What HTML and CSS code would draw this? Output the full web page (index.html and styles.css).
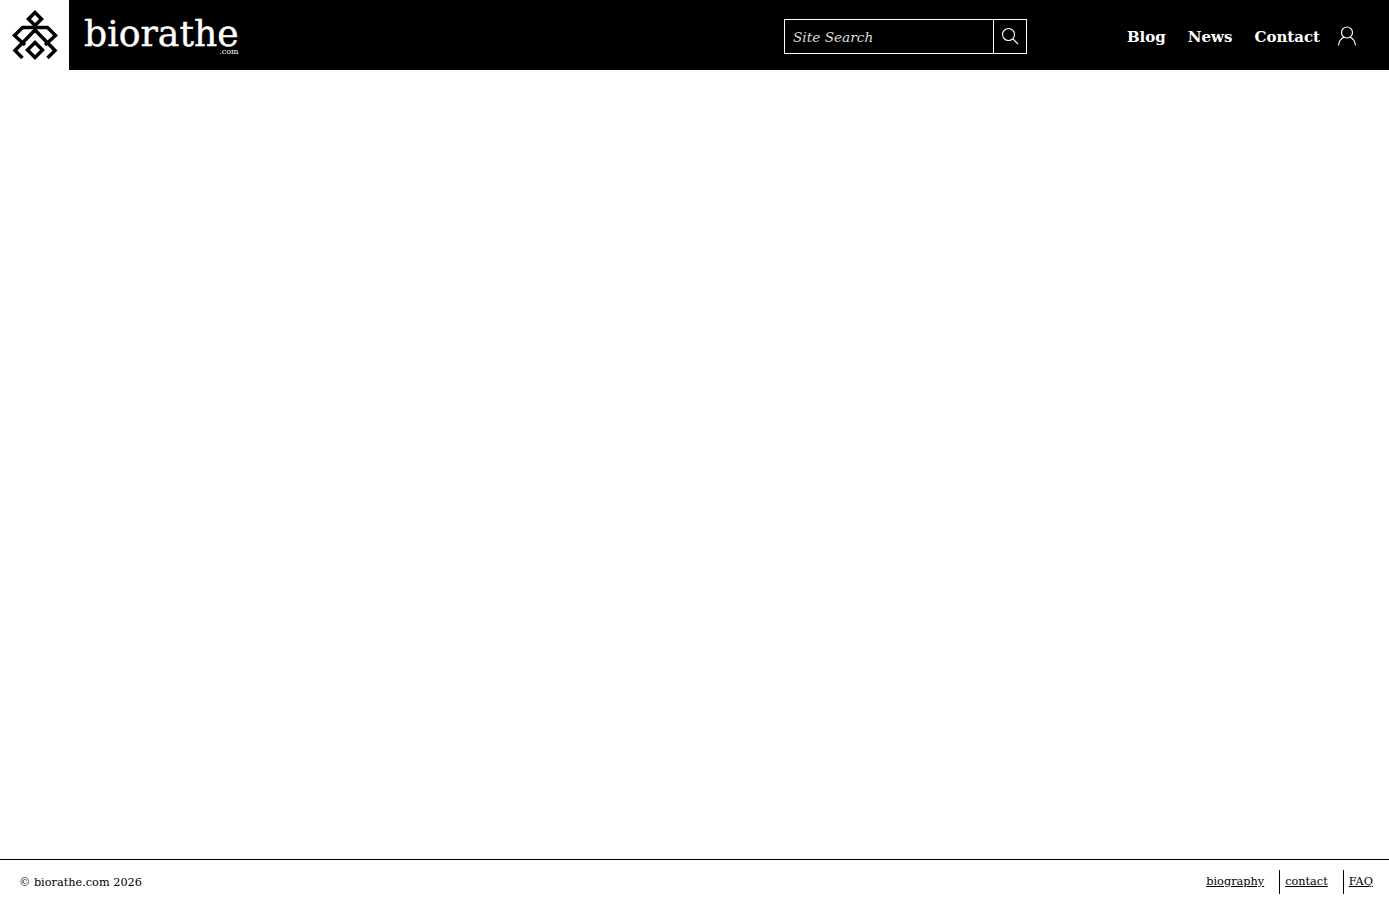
FILE: index.html
```html
<!DOCTYPE html>
<html lang="en">
<head>
    <meta charset="UTF-8">
    <meta name="viewport" content="width=device-width, initial-scale=1.0">
    <title>biorathe.com</title>
    <link rel="stylesheet" href="styles.css">
</head>
<body>

<header class="site-header">
    <a class="logo-mark" href="#">
        <svg width="46" height="50" viewBox="0 0 46 50" fill="none" stroke="#000" stroke-width="3.5">
            <path d="M23 2.5 L29.5 9 L23 15.5 L16.5 9 Z"/>
            <path d="M23 15 V21"/>
            <path d="M9.5 17.5 H36.5"/>
            <path d="M10.5 17.5 L2.5 25.5 L13 35"/>
            <path d="M35.5 17.5 L43.5 25.5 L33 35"/>
            <path d="M23 20 L3 40.5 L10.5 48"/>
            <path d="M23 20 L43 40.5 L35.5 48"/>
            <path d="M23 32.5 L30.5 40 L23 47.5 L15.5 40 Z"/>
        </svg>
    </a>
    <a class="brand" href="#">
        <span class="brand-name">biorathe</span>
        <span class="brand-tld">.com</span>
    </a>

    <form class="search">
        <input class="search-input" type="text" placeholder="Site Search">
        <button class="search-btn" type="button">
            <svg width="18" height="18" viewBox="0 0 18 18" fill="none" stroke="#fff" stroke-width="1.1">
                <circle cx="7.5" cy="7.5" r="6"/>
                <path d="M12 12 L17 17"/>
            </svg>
        </button>
    </form>

    <nav class="main-nav">
        <a href="#">Blog</a>
        <a href="#">News</a>
        <a href="#">Contact</a>
        <a class="user-link" href="#">
            <svg width="20" height="20" viewBox="0 0 20 20" fill="none" stroke="#fff" stroke-width="1.2">
                <circle cx="10" cy="6.5" r="5.5"/>
                <path d="M1.5 19.5 C2 14.5 5 12 7 11.2 M18.5 19.5 C18 14.5 15 12 13 11.2"/>
            </svg>
        </a>
    </nav>
</header>

<main class="content"></main>

<footer class="site-footer">
    <span class="copyright">© biorathe.com 2026</span>
    <div class="footer-links">
        <a href="#">biography</a>
        <a href="#">contact</a>
        <a href="#">FAQ</a>
    </div>
</footer>

</body>
</html>
```

FILE: styles.css
```css
html, body {
    height: 100%;
}
body {
    margin: 0;
    display: flex;
    flex-direction: column;
    background: #fff;
    color: #000;
    font-family: "DejaVu Serif", serif;
}
.site-header {
    height: 70px;
    flex: none;
    display: flex;
    align-items: center;
    background: #000;
}
.logo-mark {
    width: 69px;
    height: 70px;
    flex: none;
    display: flex;
    align-items: center;
    justify-content: center;
    background: #fff;
}
.brand {
    margin-left: 15px;
    display: flex;
    flex-direction: column;
    color: #fff;
    text-decoration: none;
}
.brand-name {
    font-size: 36.2px;
    line-height: 36px;
    -webkit-text-stroke: 0.4px #fff;
}
.brand-tld {
    margin-top: -3px;
    font-size: 8px;
    line-height: 6px;
    text-align: right;
}
.search {
    margin-left: auto;
    margin-top: 2px;
    width: 243px;
    height: 35px;
    box-sizing: border-box;
    display: flex;
    border: 1px solid #fff;
}
.search-input {
    flex: 1;
    min-width: 0;
    padding: 2px 8px 0;
    border: none;
    outline: none;
    background: #000;
    color: #fff;
    font-family: inherit;
    font-size: 13.7px;
    font-style: italic;
}
.search-input::placeholder {
    color: #ddd;
    opacity: 1;
}
.search-btn {
    width: 33px;
    padding: 0;
    display: flex;
    align-items: center;
    justify-content: center;
    background: #000;
    border: none;
    border-left: 1px solid #fff;
}
.main-nav {
    margin-left: 100px;
    margin-right: 32px;
    margin-top: 3px;
    display: flex;
    align-items: center;
    gap: 22px;
}
.main-nav a {
    color: #fff;
    text-decoration: none;
    font-size: 15px;
    font-weight: bold;
}
.main-nav .user-link {
    display: flex;
    margin-left: -5px;
    margin-top: -2px;
}
.content {
    flex: 1;
}
.site-footer {
    height: 44px;
    flex: none;
    display: flex;
    align-items: center;
    justify-content: space-between;
    padding: 0 16px 0 19px;
    border-top: 1px solid #000;
    font-size: 11.3px;
}
.footer-links {
    display: flex;
    align-items: center;
}
.footer-links a {
    color: #000;
    line-height: 24px;
    padding: 0 15px 0 5px;
}
.footer-links a + a {
    border-left: 1px solid #000;
}
.footer-links a:last-child {
    padding-right: 0;
}
```
